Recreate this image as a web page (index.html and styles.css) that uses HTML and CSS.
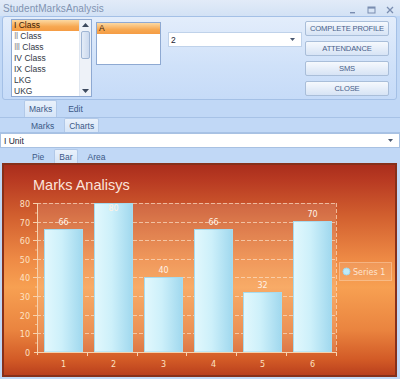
FILE: index.html
```html
<!DOCTYPE html>
<html>
<head>
<meta charset="utf-8">
<link rel="stylesheet" href="styles.css">
</head>
<body>
<div class="titlebar">
  <span class="title">StudentMarksAnalysis</span>
  <div class="winctl">
    <svg width="8" height="8" viewBox="0 0 8 8"><rect x="1" y="6" width="5" height="1.4" fill="#7a8db0"/></svg>
    <svg width="9" height="8" viewBox="0 0 9 8"><rect x="1" y="1" width="7" height="6" fill="none" stroke="#7a8db0" stroke-width="1"/><rect x="1" y="1" width="7" height="1.6" fill="#7a8db0"/></svg>
    <svg width="8" height="8" viewBox="0 0 8 8"><path d="M1 1 L7 7 M7 1 L1 7" stroke="#7a8db0" stroke-width="1.3"/></svg>
  </div>
</div>

<div class="panel">
  <div class="listbox">
    <div class="items">
      <div class="item sel">I Class</div>
      <div class="item"><span class="rn">Ⅱ</span> Class</div>
      <div class="item"><span class="rn">Ⅲ</span> Class</div>
      <div class="item">IV Class</div>
      <div class="item">IX Class</div>
      <div class="item">LKG</div>
      <div class="item">UKG</div>
    </div>
    <div class="scroll">
      <div class="sbtn"><svg width="7" height="4" viewBox="0 0 7 4"><path d="M0 4 L3.5 0 L7 4Z" fill="#3d4a5e"/></svg></div>
      <div class="thumb"></div>
      <div class="track"></div>
      <div class="sbtn"><svg width="7" height="4" viewBox="0 0 7 4"><path d="M0 0 L3.5 4 L7 0Z" fill="#3d4a5e"/></svg></div>
    </div>
  </div>
  <div class="listbox2">
    <div class="item sel">A</div>
  </div>
  <div class="combo small">
    <span>2</span>
    <svg class="arrow" width="5" height="3" viewBox="0 0 5 3"><path d="M0 0 L2.5 3 L5 0Z" fill="#4a5870"/></svg>
  </div>
  <div class="buttons">
    <div class="btn">COMPLETE PROFILE</div>
    <div class="btn">ATTENDANCE</div>
    <div class="btn">SMS</div>
    <div class="btn">CLOSE</div>
  </div>
</div>

<div class="tabrow row1">
  <div class="tab active">Marks</div>
  <div class="tab">Edit</div>
</div>
<div class="tabrow row2">
  <div class="tab">Marks</div>
  <div class="tab active">Charts</div>
</div>
<div class="combo wide">
  <span>I Unit</span>
  <svg class="arrow" width="5" height="3" viewBox="0 0 5 3"><path d="M0 0 L2.5 3 L5 0Z" fill="#4a5870"/></svg>
</div>
<div class="tabrow row3">
  <div class="tab">Pie</div>
  <div class="tab active">Bar</div>
  <div class="tab">Area</div>
</div>

<div class="chart">
  <svg width="395" height="214" viewBox="0 0 395 214">
    <defs>
      <linearGradient id="bg" x1="0" y1="0" x2="0" y2="1">
        <stop offset="0" stop-color="#a82c1c"/>
        <stop offset="0.08" stop-color="#b83a22"/>
        <stop offset="0.25" stop-color="#d2602f"/>
        <stop offset="0.45" stop-color="#ee8a45"/>
        <stop offset="0.58" stop-color="#f7a052"/>
        <stop offset="0.78" stop-color="#ea843f"/>
        <stop offset="0.92" stop-color="#d25a26"/>
        <stop offset="1" stop-color="#b63c1c"/>
      </linearGradient>
      <linearGradient id="bar" x1="0" y1="0" x2="1" y2="0">
        <stop offset="0" stop-color="#e2f8fd"/>
        <stop offset="0.45" stop-color="#cdf0fa"/>
        <stop offset="1" stop-color="#a0d8ee"/>
      </linearGradient>
    </defs>
    <rect x="0" y="0" width="395" height="214" fill="url(#bg)"/>
    <rect x="1" y="1" width="393" height="212" fill="none" stroke="#86301a" stroke-width="2"/>
    <text x="31" y="27" class="ctitle">Marks Analisys</text>

    <rect x="35" y="40" width="299" height="149" fill="#ffffff" fill-opacity="0.12"/>
    <g stroke="#fbe0c6" stroke-opacity="0.7" stroke-dasharray="4 2" stroke-width="1">
      <line x1="35" y1="40.5" x2="334" y2="40.5"/>
      <line x1="35" y1="59.5" x2="334" y2="59.5"/>
      <line x1="35" y1="77.5" x2="334" y2="77.5"/>
      <line x1="35" y1="96.5" x2="334" y2="96.5"/>
      <line x1="35" y1="114.5" x2="334" y2="114.5"/>
      <line x1="35" y1="133.5" x2="334" y2="133.5"/>
      <line x1="35" y1="152.5" x2="334" y2="152.5"/>
      <line x1="35" y1="170.5" x2="334" y2="170.5"/>
      <line x1="334.5" y1="40" x2="334.5" y2="189"/>
    </g>

    <g stroke="#a6dbee" stroke-width="1">
      <rect x="42.5" y="66.5" width="38" height="122.5" fill="url(#bar)"/>
      <rect x="92.5" y="40.5" width="38" height="148.5" fill="url(#bar)"/>
      <rect x="142.5" y="114.5" width="38" height="74.5" fill="url(#bar)"/>
      <rect x="192.5" y="66.5" width="38" height="122.5" fill="url(#bar)"/>
      <rect x="241.5" y="129.5" width="38" height="59.5" fill="url(#bar)"/>
      <rect x="291.5" y="58.5" width="38" height="130.5" fill="url(#bar)"/>
    </g>

    <g class="vals" text-anchor="middle">
      <text x="61.5" y="62">66</text>
      <text x="111.5" y="48">80</text>
      <text x="161.5" y="110">40</text>
      <text x="211.5" y="62">66</text>
      <text x="260.5" y="125">32</text>
      <text x="310.5" y="54">70</text>
    </g>

    <g stroke="#f6d2ae" stroke-width="1">
      <line x1="35.5" y1="40" x2="35.5" y2="192"/>
      <line x1="32" y1="189.5" x2="334" y2="189.5"/>
      <line x1="31" y1="40.5" x2="35" y2="40.5"/>
      <line x1="31" y1="59.5" x2="35" y2="59.5"/>
      <line x1="31" y1="77.5" x2="35" y2="77.5"/>
      <line x1="31" y1="96.5" x2="35" y2="96.5"/>
      <line x1="31" y1="114.5" x2="35" y2="114.5"/>
      <line x1="31" y1="133.5" x2="35" y2="133.5"/>
      <line x1="31" y1="152.5" x2="35" y2="152.5"/>
      <line x1="31" y1="170.5" x2="35" y2="170.5"/>
      <line x1="85.5" y1="189" x2="85.5" y2="193"/>
      <line x1="135.5" y1="189" x2="135.5" y2="193"/>
      <line x1="184.5" y1="189" x2="184.5" y2="193"/>
      <line x1="234.5" y1="189" x2="234.5" y2="193"/>
      <line x1="284.5" y1="189" x2="284.5" y2="193"/>
      <line x1="334.5" y1="189" x2="334.5" y2="193"/>
    </g>
    <g stroke="#f6d2ae" stroke-width="1" stroke-opacity="0.7">
      <line x1="33" y1="50" x2="35" y2="50"/>
      <line x1="33" y1="68.5" x2="35" y2="68.5"/>
      <line x1="33" y1="87" x2="35" y2="87"/>
      <line x1="33" y1="105.5" x2="35" y2="105.5"/>
      <line x1="33" y1="124" x2="35" y2="124"/>
      <line x1="33" y1="143" x2="35" y2="143"/>
      <line x1="33" y1="161.5" x2="35" y2="161.5"/>
      <line x1="33" y1="180" x2="35" y2="180"/>
    </g>

    <g class="axis" text-anchor="end">
      <text x="28" y="43.5">80</text>
      <text x="28" y="62.5">70</text>
      <text x="28" y="80.5">60</text>
      <text x="28" y="99.5">50</text>
      <text x="28" y="117.5">40</text>
      <text x="28" y="136.5">30</text>
      <text x="28" y="155.5">20</text>
      <text x="28" y="173.5">10</text>
      <text x="28" y="192.5">0</text>
    </g>
    <g class="axis" text-anchor="middle">
      <text x="61.5" y="204">1</text>
      <text x="111.5" y="204">2</text>
      <text x="161.5" y="204">3</text>
      <text x="211.5" y="204">4</text>
      <text x="260.5" y="204">5</text>
      <text x="310.5" y="204">6</text>
    </g>

    <rect x="337.5" y="99.5" width="52" height="18" fill="#ffffff" fill-opacity="0.1" stroke="#fbd6b4" stroke-opacity="0.5"/>
    <circle cx="344.5" cy="108.5" r="3.5" fill="#bfeaf8" stroke="#9fd8ee"/>
    <text x="351" y="111.5" class="legend">Series 1</text>
  </svg>
</div>
</body>
</html>
```

FILE: styles.css
```css
* { box-sizing: border-box; }

body {
  margin: 0;
  width: 400px;
  height: 379px;
  overflow: hidden;
  background: #c1d8f6;
  font-family: "Liberation Sans", Arial, sans-serif;
  font-size: 8px;
  color: #1e2a3c;
}

.titlebar {
  height: 16px;
  display: flex;
  align-items: center;
  padding: 0 6px 0 3px;
  background: linear-gradient(#e2ebf8, #d3e2f5);
}

.title {
  font-size: 10px;
  color: #8193b1;
  letter-spacing: 0.1px;
}

.winctl {
  margin-left: auto;
  display: flex;
  align-items: center;
  gap: 10px;
  padding-top: 3px;
}

.panel {
  height: 84px;
  margin: 0 3px 0 2px;
  border: 1px solid #a4c0e6;
  border-radius: 3px;
  background: linear-gradient(#e3edfb, #cfe1f9 60%, #c6dbf8);
  display: flex;
  align-items: flex-start;
  padding: 2px 7px 0 8px;
}

.listbox {
  width: 81px;
  height: 78px;
  border: 1px solid #8ea9d2;
  background: #fff;
  display: flex;
}

.items { flex: 1; }

.item {
  height: 11px;
  line-height: 11px;
  font-size: 8.5px;
  padding-left: 2px;
  color: #333a46;
  white-space: nowrap;
}

.item.sel {
  background: linear-gradient(#fcd9a2, #f7a851 60%, #f59c44);
  color: #3a1c08;
}

.rn { color: #9a9a9a; }

.scroll {
  width: 12px;
  display: flex;
  flex-direction: column;
  background: #eef2f8;
  border-left: 1px solid #e0e7f1;
}

.sbtn {
  height: 10px;
  display: flex;
  align-items: center;
  justify-content: center;
}

.thumb {
  height: 28px;
  margin: 1px 1px;
  border: 1px solid #9fb5d4;
  border-radius: 2px;
  background: linear-gradient(90deg, #e4ecf7, #cbd9ee);
}

.track { flex: 1; }

.listbox2 {
  width: 65px;
  height: 43px;
  margin: 3px 0 0 4px;
  border: 1px solid #8ea9d2;
  background: #fff;
}

.combo {
  height: 15px;
  border: 1px solid #a8c1e2;
  background: #fff;
  display: flex;
  align-items: center;
  padding: 0 6px 0 2px;
  font-size: 8.5px;
  color: #1c2433;
}

.combo .arrow { margin-left: auto; }

.combo.small {
  width: 134px;
  margin: 13px 0 0 7px;
  border-color: #bfd2ea;
}

.combo.wide {
  width: 400px;
  padding-left: 3px;
}

.buttons {
  margin: 2px 0 0 auto;
  display: flex;
  flex-direction: column;
  gap: 5px;
}

.btn {
  width: 84px;
  height: 15px;
  line-height: 13px;
  border: 1px solid #a9bed9;
  border-radius: 2px;
  background: linear-gradient(#f6f9fd, #e6eef9 50%, #d7e4f5);
  text-align: center;
  color: #48608a;
  font-size: 7.6px;
  letter-spacing: -0.15px;
  white-space: nowrap;
}

.tabrow {
  display: flex;
  align-items: flex-end;
  border-bottom: 1px solid #a7c2e6;
}

.row1 {
  height: 18px;
  padding-left: 24px;
  gap: 6px;
}

.row2 {
  height: 15px;
  padding-left: 26px;
  gap: 5px;
}

.row3 {
  height: 15px;
  padding-left: 27px;
  gap: 5px;
  border-bottom: none;
}

.tab {
  height: 14px;
  line-height: 14px;
  padding: 0 4px;
  font-size: 8.5px;
  color: #3c5887;
  border: 1px solid transparent;
  border-bottom: none;
}

.row1 .tab { height: 17px; line-height: 16px; }

.tab.active {
  background: linear-gradient(#e9f1fb, #d6e5f8);
  border-color: #b2c9e8;
  border-radius: 2px 2px 0 0;
}

.chart {
  width: 395px;
  height: 214px;
  margin-left: 2px;
}

.chart svg { display: block; }

.ctitle {
  font-family: "Liberation Sans", Arial, sans-serif;
  font-size: 14.5px;
  fill: #fbe5dc;
}

.vals text {
  font-family: "DejaVu Sans", sans-serif;
  font-size: 8px;
  fill: #fff2e6;
}

.axis text {
  font-family: "DejaVu Sans", sans-serif;
  font-size: 8px;
  fill: #fde2c2;
}

.legend {
  font-family: "DejaVu Sans", sans-serif;
  font-size: 8px;
  fill: #fde6d2;
}
```
